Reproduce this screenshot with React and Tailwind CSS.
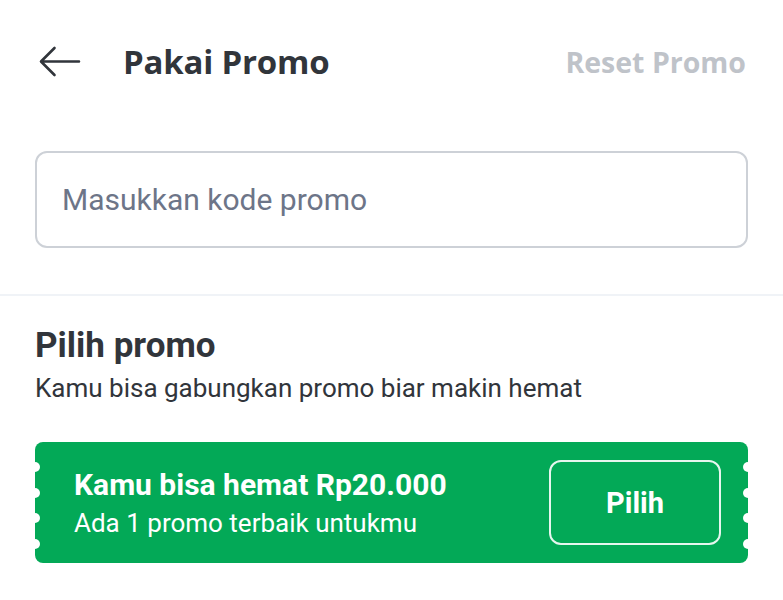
import React from 'react';

const notches = [25, 51, 76, 102];

function BackArrow() {
  return (
    <svg width="42" height="32" viewBox="0 0 42 32" fill="none">
      <path
        d="M40 15.5H2.5M15.5 2L2 15.5 15.5 29"
        stroke="#31353b"
        strokeWidth="2.6"
        strokeLinecap="round"
        strokeLinejoin="round"
      />
    </svg>
  );
}

function PromoTicket() {
  return (
    <div className="relative h-[121px] rounded-[8px] bg-[#03a957] flex items-center justify-between pl-[39px] pr-[27px]">
      {notches.map((top) => (
        <span
          key={'l' + top}
          className="absolute left-[-5px] w-[10px] h-[10px] rounded-full bg-white"
          style={{ top: top - 5 }}
        />
      ))}
      {notches.map((top) => (
        <span
          key={'r' + top}
          className="absolute right-[-5px] w-[10px] h-[10px] rounded-full bg-white"
          style={{ top: top - 5 }}
        />
      ))}
      <div className="flex flex-col">
        <div className="text-[30px] leading-[36px] font-bold text-white">Kamu bisa hemat Rp20.000</div>
        <div className="mt-[4px] text-[26px] leading-[32px] text-white">Ada 1 promo terbaik untukmu</div>
      </div>
      <button className="w-[172px] h-[85px] rounded-[12px] border-2 border-white/90 text-white text-[29px] font-bold pt-[3px]">
        Pilih
      </button>
    </div>
  );
}

export default function App() {
  return (
    <div className="w-[783px] h-[600px] bg-white overflow-hidden font-['Roboto',sans-serif] text-[#31353b]">
      <div className="h-[124px] flex items-center justify-between pl-[39px] pr-[37px]">
        <div className="flex items-center">
          <BackArrow />
          <h1 className="ml-[42px] font-['Open_Sans',sans-serif] text-[33px] font-bold tracking-[-0.2px] text-[#31353b]">
            Pakai Promo
          </h1>
        </div>
        <span className="font-['Open_Sans',sans-serif] text-[28.5px] font-bold text-[#bfc3c9]">Reset Promo</span>
      </div>

      <div className="px-[35px] pt-[27px]">
        <div className="h-[97px] rounded-[12px] border-2 border-[#cdd1d7] flex items-center pl-[25px]">
          <span className="text-[30px] text-[#6d7588]">Masukkan kode promo</span>
        </div>
      </div>

      <div className="mt-[46px] h-[2px] bg-[#f0f3f7]" />

      <div className="px-[35px] pt-[30px]">
        <h2 className="text-[35px] leading-[40px] font-bold text-[#31353b]">Pilih promo</h2>
        <p className="mt-[6px] text-[26px] leading-[32px] text-[#31353b]">
          Kamu bisa gabungkan promo biar makin hemat
        </p>
        <div className="mt-[38px]">
          <PromoTicket />
        </div>
      </div>
    </div>
  );
}
